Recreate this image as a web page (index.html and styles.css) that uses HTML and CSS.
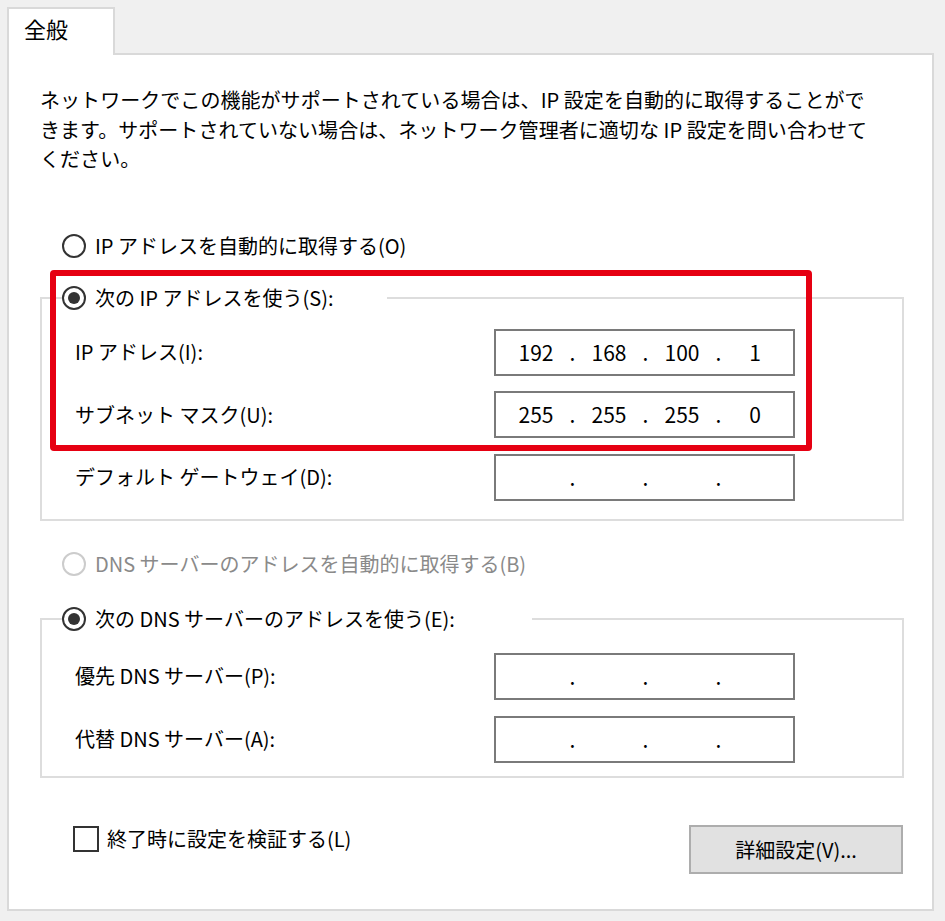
FILE: index.html
```html
<!DOCTYPE html>
<html lang="ja">
<head>
<meta charset="utf-8">
<title>インターネット プロトコル バージョン 4 (TCP/IPv4) のプロパティ</title>
<link rel="stylesheet" href="styles.css">
</head>
<body>
<div class="window">
  <div class="tab">全般</div>
  <div class="panel">
    <p class="intro">ネットワークでこの機能がサポートされている場合は、IP 設定を自動的に取得することがで<br>きます。サポートされていない場合は、ネットワーク管理者に適切な IP 設定を問い合わせて<br>ください。</p>

    <div class="option option-top">
      <span class="radio"></span>
      <span class="option-text">IP アドレスを自動的に取得する(O)</span>
    </div>

    <section class="group group-ip">
      <div class="group-head">
        <span class="head-line head-line-start"></span>
        <div class="option legend legend-ip">
          <span class="radio radio-checked"></span>
          <span class="option-text">次の IP アドレスを使う(S):</span>
        </div>
        <span class="head-line head-line-end"></span>
      </div>
      <div class="group-body body-ip">
        <div class="field-row">
          <span class="field-label">IP アドレス(I):</span>
          <div class="ip-field">
            <span class="octet">192</span><span class="dot">.</span><span class="octet">168</span><span class="dot">.</span><span class="octet">100</span><span class="dot">.</span><span class="octet">1</span>
          </div>
        </div>
        <div class="field-row">
          <span class="field-label">サブネット マスク(U):</span>
          <div class="ip-field">
            <span class="octet">255</span><span class="dot">.</span><span class="octet">255</span><span class="dot">.</span><span class="octet">255</span><span class="dot">.</span><span class="octet">0</span>
          </div>
        </div>
        <div class="field-row">
          <span class="field-label">デフォルト ゲートウェイ(D):</span>
          <div class="ip-field">
            <span class="octet"></span><span class="dot">.</span><span class="octet"></span><span class="dot">.</span><span class="octet"></span><span class="dot">.</span><span class="octet"></span>
          </div>
        </div>
      </div>
    </section>

    <div class="option option-dns-auto disabled">
      <span class="radio"></span>
      <span class="option-text">DNS サーバーのアドレスを自動的に取得する(B)</span>
    </div>

    <section class="group group-dns">
      <div class="group-head">
        <span class="head-line head-line-start"></span>
        <div class="option legend legend-dns">
          <span class="radio radio-checked"></span>
          <span class="option-text">次の DNS サーバーのアドレスを使う(E):</span>
        </div>
        <span class="head-line head-line-end"></span>
      </div>
      <div class="group-body body-dns">
        <div class="field-row">
          <span class="field-label">優先 DNS サーバー(P):</span>
          <div class="ip-field">
            <span class="octet"></span><span class="dot">.</span><span class="octet"></span><span class="dot">.</span><span class="octet"></span><span class="dot">.</span><span class="octet"></span>
          </div>
        </div>
        <div class="field-row">
          <span class="field-label">代替 DNS サーバー(A):</span>
          <div class="ip-field">
            <span class="octet"></span><span class="dot">.</span><span class="octet"></span><span class="dot">.</span><span class="octet"></span><span class="dot">.</span><span class="octet"></span>
          </div>
        </div>
      </div>
    </section>

    <div class="footer">
      <label class="check-row">
        <span class="checkbox"></span>
        <span class="check-text">終了時に設定を検証する(L)</span>
      </label>
      <button class="advanced" type="button">詳細設定(V)...</button>
    </div>
  </div>
  <div class="highlight"></div>
</div>
</body>
</html>
```

FILE: styles.css
```css
* {
  box-sizing: border-box;
}

html, body {
  margin: 0;
  padding: 0;
}

body {
  background: #f0f0f0;
  font-family: "Noto Sans CJK JP", "Noto Sans", sans-serif;
  color: #000;
  font-size: 20px;
}

.window {
  position: relative;
  width: 945px;
  height: 921px;
  padding: 7px 0 0 7px;
}

.tab {
  position: relative;
  z-index: 1;
  width: 108px;
  height: 48px;
  margin-bottom: -2px;
  padding-left: 15px;
  background: #fff;
  border: 2px solid #d9d9d9;
  border-bottom: none;
  font-size: 22px;
  line-height: 38px;
}

.panel {
  width: 927px;
  height: 858px;
  background: #fff;
  border: 2px solid #d9d9d9;
  padding: 30px 29px 0 31px;
}

.intro {
  margin: 0;
  font-size: 20px;
  line-height: 29.5px;
  white-space: nowrap;
  letter-spacing: 0.05px;
}

.option {
  display: flex;
  align-items: center;
  height: 30px;
  gap: 9px;
  line-height: 30px;
  white-space: nowrap;
}

.option-top {
  margin-top: 57px;
  margin-left: 22px;
}

.option-dns-auto {
  margin-top: 28px;
  margin-left: 22px;
}

.radio {
  position: relative;
  flex: none;
  width: 24px;
  height: 24px;
  border: 2px solid #333;
  border-radius: 50%;
  background: #fff;
}

.radio-checked::after {
  content: "";
  position: absolute;
  left: 4px;
  top: 4px;
  width: 12px;
  height: 12px;
  border-radius: 50%;
  background: #333;
}

.disabled .radio {
  border-color: #cccccc;
}

.disabled .option-text {
  color: #8a8a8a;
}

.group {
  width: 864px;
  margin-left: 0;
}

.group-ip {
  margin-top: 22px;
}

.group-dns {
  margin-top: 25px;
}

.group-head {
  display: flex;
  align-items: center;
  height: 30px;
}

.head-line {
  height: 2px;
  background: #dddddd;
}

.head-line-start {
  width: 22px;
}

.head-line-end {
  flex: 1;
}

.legend-ip {
  width: 325px;
}

.legend-dns {
  width: 470px;
}

.group-body {
  margin-top: -14px;
  border: 2px solid #dddddd;
  border-top: none;
  display: flex;
  flex-direction: column;
}

.body-ip {
  padding: 30px 0 18px 0;
  gap: 15.5px;
}

.body-dns {
  padding: 33px 0 13px 0;
  gap: 16px;
}

.field-row {
  display: flex;
  align-items: center;
  height: 47px;
  padding-left: 33px;
  padding-right: 107px;
}

.field-label {
  flex: 1;
  white-space: nowrap;
  line-height: 30px;
}

.ip-field {
  display: flex;
  align-items: center;
  width: 301px;
  height: 47px;
  border: 2px solid #7a7a7a;
  padding-left: 9px;
  font-size: 21px;
  line-height: 43px;
  color: #000;
}

.octet {
  width: 62px;
  text-align: center;
}

.dot {
  width: 11px;
  text-align: center;
}

.footer {
  display: flex;
  justify-content: space-between;
  align-items: flex-start;
  margin-top: 47px;
  padding-left: 33px;
}

.check-row {
  display: flex;
  align-items: center;
  gap: 8px;
  height: 28px;
  line-height: 28px;
}

.checkbox {
  flex: none;
  width: 26px;
  height: 26px;
  border: 2px solid #333;
  background: #fff;
}

.advanced {
  width: 214px;
  height: 49px;
  margin-right: 0;
  padding: 0;
  background: #e1e1e1;
  border: 2px solid #adadad;
  font-family: "Noto Sans CJK JP", "Noto Sans", sans-serif;
  font-size: 20px;
  color: #000;
  line-height: 45px;
}

.highlight {
  position: absolute;
  left: 50px;
  top: 270px;
  width: 762px;
  height: 181px;
  border: 6px solid #e60012;
  border-radius: 4px;
  pointer-events: none;
}
```
